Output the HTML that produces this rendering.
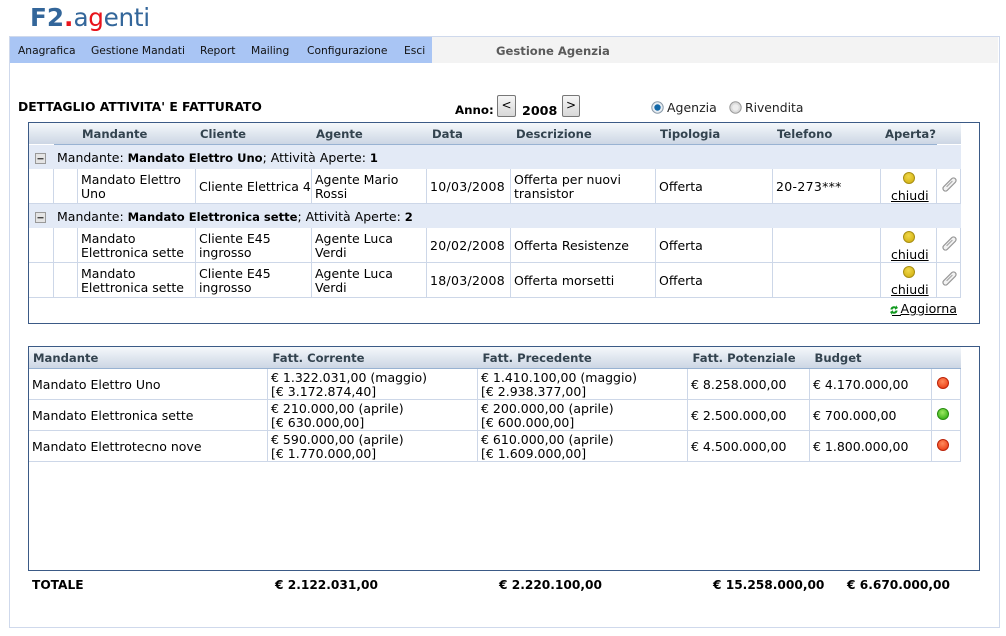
<!DOCTYPE html>
<html><head><meta charset="utf-8"><title>F2.agenti</title>
<style>
html,body{margin:0;padding:0;background:#fff}
body{width:1006px;height:636px;position:relative;overflow:hidden;font-family:"DejaVu Sans","Liberation Sans",sans-serif;font-size:12.5px;color:#000}
div,span.t,a.t{position:absolute}
.t{position:absolute;white-space:nowrap;line-height:14px}
.m{font-size:10.7px;color:#111}
.h{font-weight:bold;font-size:11.6px;color:#33434f}
.b{font-weight:bold}
.bb{font-weight:bold;font-size:12.2px;color:#000}
.n{letter-spacing:.3px}
.t b.g2{font-size:11.55px}
.l{background:#cdd7e8}
.hd{background:linear-gradient(#f5f8fb,#ccd6e4)}
.g{background:#e3eaf6}
a{color:#000;text-decoration:underline}
svg{position:absolute;overflow:visible}
.y,.r,.v{width:10px;height:10px;border-radius:50%}
.y{background:radial-gradient(circle at 45% 35%,#f0d84a,#d8b81c 70%);border:1px solid #a88f14}
.r{background:radial-gradient(circle at 45% 35%,#ff8a5c,#ee4a20 70%);border:1px solid #bb2208}
.v{background:radial-gradient(circle at 45% 35%,#9ce860,#44b820 70%);border:1px solid #288c10}
</style></head><body>

<span class="t" style="left:30px;top:2px;line-height:32px;font-size:24.7px;color:#33669a"><b>F2</b><b style="color:#e8141c">.</b><span style="letter-spacing:-.3px">a<span style="color:#e8141c">g</span>enti</span></span>

<div style="left:9px;top:36px;width:989px;height:590px;border:1px solid #cfd9ec"></div>
<div style="left:10px;top:37px;width:422px;height:26px;background:#a9c5f4"></div>
<div style="left:432px;top:37px;width:566px;height:26px;background:#f3f3f3"></div>
<span class="t m" style="left:18px;top:44px">Anagrafica</span>
<span class="t m" style="left:91px;top:44px">Gestione Mandati</span>
<span class="t m" style="left:200px;top:44px">Report</span>
<span class="t m" style="left:251px;top:44px">Mailing</span>
<span class="t m" style="left:307px;top:44px">Configurazione</span>
<span class="t m" style="left:404px;top:44px">Esci</span>
<span class="t" style="left:496px;top:44px;font-weight:bold;font-size:11.6px;color:#5a5a5a">Gestione Agenzia</span>

<span class="t b" style="left:18px;top:100px;font-size:12.35px;color:#000">DETTAGLIO ATTIVITA' E FATTURATO</span>
<span class="t b" style="left:455px;top:103px;font-size:11.8px;color:#000">Anno:</span>
<div style="left:497px;top:95px;width:17px;height:20px;border:1px solid #777;border-radius:2px;background:linear-gradient(#f6f6f6,#d8d8d8);text-align:center;line-height:18px;font-size:12px">&lt;</div>
<span class="t b" style="left:522px;top:104px;font-size:12.7px;color:#000">2008</span>
<div style="left:562px;top:95px;width:16px;height:20px;border:1px solid #777;border-radius:2px;background:linear-gradient(#f6f6f6,#d8d8d8);text-align:center;line-height:18px;font-size:12px">&gt;</div>

<svg style="left:651px;top:101px" width="13" height="13"><circle cx="6.5" cy="6.5" r="5.7" fill="#e8eef4" stroke="#8a9aa8"/><circle cx="6.5" cy="6.5" r="3.2" fill="#1368a8"/></svg>
<span class="t" style="left:667px;top:101px;color:#222">Agenzia</span>
<svg style="left:729px;top:101px" width="13" height="13"><circle cx="6.5" cy="6.5" r="5.7" fill="#dcdcdc" stroke="#9a9a9a"/><circle cx="6.5" cy="6.5" r="3.2" fill="#eee"/></svg>
<span class="t" style="left:745px;top:101px;color:#222;font-size:12.35px">Rivendita</span>

<!-- panel 1 -->
<div style="left:28px;top:122px;width:950px;height:200px;border:1px solid #3b5a86"></div>
<div class="hd" style="left:29px;top:123px;width:932px;height:21px"></div>
<div style="left:54px;top:144px;width:883px;height:1px;background:#98b2d2"></div>
<span class="t h" style="left:82px;top:127px">Mandante</span>
<span class="t h" style="left:200px;top:127px">Cliente</span>
<span class="t h" style="left:316px;top:127px">Agente</span>
<span class="t h" style="left:432px;top:127px">Data</span>
<span class="t h" style="left:516px;top:127px">Descrizione</span>
<span class="t h" style="left:660px;top:127px">Tipologia</span>
<span class="t h" style="left:777px;top:127px">Telefono</span>
<span class="t h" style="left:885px;top:127px">Aperta?</span>

<div class="g" style="left:29px;top:145px;width:932px;height:24px"></div>
<div class="g" style="left:29px;top:204px;width:932px;height:24px"></div>
<div class="l" style="left:29px;top:203px;width:932px;height:1px"></div>
<div class="l" style="left:29px;top:262px;width:932px;height:1px"></div>
<div class="l" style="left:29px;top:297px;width:932px;height:1px"></div>

<div class="l" style="left:53px;top:169px;width:1px;height:34px"></div>
<div class="l" style="left:77px;top:169px;width:1px;height:34px"></div>
<div class="l" style="left:195px;top:169px;width:1px;height:34px"></div>
<div class="l" style="left:311px;top:169px;width:1px;height:34px"></div>
<div class="l" style="left:426px;top:169px;width:1px;height:34px"></div>
<div class="l" style="left:510px;top:169px;width:1px;height:34px"></div>
<div class="l" style="left:655px;top:169px;width:1px;height:34px"></div>
<div class="l" style="left:772px;top:169px;width:1px;height:34px"></div>
<div class="l" style="left:880px;top:169px;width:1px;height:34px"></div>
<div class="l" style="left:936px;top:169px;width:1px;height:34px"></div>
<div class="l" style="left:960px;top:169px;width:1px;height:34px"></div>

<div class="l" style="left:53px;top:228px;width:1px;height:69px"></div>
<div class="l" style="left:77px;top:228px;width:1px;height:69px"></div>
<div class="l" style="left:195px;top:228px;width:1px;height:69px"></div>
<div class="l" style="left:311px;top:228px;width:1px;height:69px"></div>
<div class="l" style="left:426px;top:228px;width:1px;height:69px"></div>
<div class="l" style="left:510px;top:228px;width:1px;height:69px"></div>
<div class="l" style="left:655px;top:228px;width:1px;height:69px"></div>
<div class="l" style="left:772px;top:228px;width:1px;height:69px"></div>
<div class="l" style="left:880px;top:228px;width:1px;height:69px"></div>
<div class="l" style="left:936px;top:228px;width:1px;height:69px"></div>
<div class="l" style="left:960px;top:228px;width:1px;height:69px"></div>

<svg style="left:35px;top:153px" width="12" height="12"><rect x=".5" y=".5" width="10" height="10" fill="#e4e4e4" stroke="#999"/><rect x="2.5" y="5" width="6" height="1.4" fill="#444"/></svg>
<svg style="left:35px;top:212px" width="12" height="12"><rect x=".5" y=".5" width="10" height="10" fill="#e4e4e4" stroke="#999"/><rect x="2.5" y="5" width="6" height="1.4" fill="#444"/></svg>
<span class="t" style="left:57px;top:151px">Mandante: <b class="g2">Mandato Elettro Uno</b>; Attività Aperte: <b class="g2">1</b></span>
<span class="t" style="left:57px;top:210px">Mandante: <b class="g2">Mandato Elettronica sette</b>; Attività Aperte: <b class="g2">2</b></span>

<span class="t" style="left:81px;top:173px">Mandato Elettro<br>Uno</span>
<span class="t" style="left:199px;top:180px">Cliente Elettrica 4</span>
<span class="t" style="left:315px;top:173px">Agente Mario<br>Rossi</span>
<span class="t n" style="left:430px;top:180px">10/03/2008</span>
<span class="t" style="left:514px;top:173px">Offerta per nuovi<br>transistor</span>
<span class="t" style="left:659px;top:180px">Offerta</span>
<span class="t n" style="left:776px;top:180px">20-273***</span>

<span class="t" style="left:81px;top:232px">Mandato<br>Elettronica sette</span>
<span class="t" style="left:199px;top:232px">Cliente E45<br>ingrosso</span>
<span class="t" style="left:315px;top:232px">Agente Luca<br>Verdi</span>
<span class="t n" style="left:430px;top:239px">20/02/2008</span>
<span class="t" style="left:514px;top:239px">Offerta Resistenze</span>
<span class="t" style="left:659px;top:239px">Offerta</span>

<span class="t" style="left:81px;top:267px">Mandato<br>Elettronica sette</span>
<span class="t" style="left:199px;top:267px">Cliente E45<br>ingrosso</span>
<span class="t" style="left:315px;top:267px">Agente Luca<br>Verdi</span>
<span class="t n" style="left:430px;top:274px">18/03/2008</span>
<span class="t" style="left:514px;top:274px">Offerta morsetti</span>
<span class="t" style="left:659px;top:274px">Offerta</span>

<div class="y" style="left:903px;top:172px"></div>
<div class="y" style="left:903px;top:231px"></div>
<div class="y" style="left:903px;top:266px"></div>
<a class="t" style="left:891px;top:189px">chiudi</a>
<a class="t" style="left:891px;top:248px">chiudi</a>
<a class="t" style="left:891px;top:283px">chiudi</a>

<svg style="left:942px;top:177px" width="15" height="15" viewBox="0 0 15 15"><path d="M1.7 9.7 9.7 1.7A2.5 2.5 0 0 1 13.3 5.3L5.3 13.3A2.5 2.5 0 0 1 1.7 9.7Z" fill="#f2f2f2" stroke="#979797" stroke-width="1.2"/><path d="M4.6 9.8 10.4 4" fill="none" stroke="#a8a8a8" stroke-width="1.2"/></svg>
<svg style="left:942px;top:236px" width="15" height="15" viewBox="0 0 15 15"><path d="M1.7 9.7 9.7 1.7A2.5 2.5 0 0 1 13.3 5.3L5.3 13.3A2.5 2.5 0 0 1 1.7 9.7Z" fill="#f2f2f2" stroke="#979797" stroke-width="1.2"/><path d="M4.6 9.8 10.4 4" fill="none" stroke="#a8a8a8" stroke-width="1.2"/></svg>
<svg style="left:942px;top:271px" width="15" height="15" viewBox="0 0 15 15"><path d="M1.7 9.7 9.7 1.7A2.5 2.5 0 0 1 13.3 5.3L5.3 13.3A2.5 2.5 0 0 1 1.7 9.7Z" fill="#f2f2f2" stroke="#979797" stroke-width="1.2"/><path d="M4.6 9.8 10.4 4" fill="none" stroke="#a8a8a8" stroke-width="1.2"/></svg>

<svg style="left:890px;top:305px" width="8" height="10" viewBox="0 0 8 10"><path d="M.5 4.5C.5 2 3 .6 6 1.6V.2L8 3 5 4.8V3.5C3.8 3 2.9 3.4 2.6 4.5ZM7.5 5.5C7.5 8 5 9.4 2 8.4V9.8L0 7 3 5.2V6.5C4.2 7 5.1 6.6 5.4 5.5Z" fill="#129a20"/></svg>
<a class="t" style="left:897.5px;top:302px;padding-left:3px;font-size:12.6px">Aggiorna</a>
<div style="left:892px;top:315px;width:9px;height:1px;background:#000"></div>

<!-- panel 2 -->
<div style="left:28px;top:346px;width:950px;height:223px;border:1px solid #3b5a86"></div>
<div class="hd" style="left:29px;top:347px;width:932px;height:21px"></div>
<div style="left:29px;top:368px;width:932px;height:1px;background:#98b2d2"></div>
<span class="t h" style="left:33px;top:351px">Mandante</span>
<span class="t h" style="left:272.5px;top:351px">Fatt. Corrente</span>
<span class="t h" style="left:482.5px;top:351px">Fatt. Precedente</span>
<span class="t h" style="left:692.5px;top:351px">Fatt. Potenziale</span>
<span class="t h" style="left:814.5px;top:351px">Budget</span>

<div class="l" style="left:29px;top:399px;width:932px;height:1px"></div>
<div class="l" style="left:29px;top:430px;width:932px;height:1px"></div>
<div class="l" style="left:29px;top:461px;width:932px;height:1px"></div>
<div class="l" style="left:267px;top:369px;width:1px;height:92px"></div>
<div class="l" style="left:477px;top:369px;width:1px;height:92px"></div>
<div class="l" style="left:687px;top:369px;width:1px;height:92px"></div>
<div class="l" style="left:809px;top:369px;width:1px;height:92px"></div>
<div class="l" style="left:931px;top:369px;width:1px;height:92px"></div>
<div class="l" style="left:960px;top:369px;width:1px;height:92px"></div>

<span class="t" style="left:32px;top:378px">Mandato Elettro Uno</span>
<span class="t" style="left:32px;top:409px">Mandato Elettronica sette</span>
<span class="t" style="left:32px;top:440px">Mandato Elettrotecno nove</span>

<span class="t" style="left:271px;top:371px">€ 1.322.031,00 (maggio)<br>[€ 3.172.874,40]</span>
<span class="t" style="left:271px;top:402px">€ 210.000,00 (aprile)<br>[€ 630.000,00]</span>
<span class="t" style="left:271px;top:433px">€ 590.000,00 (aprile)<br>[€ 1.770.000,00]</span>
<span class="t" style="left:481px;top:371px">€ 1.410.100,00 (maggio)<br>[€ 2.938.377,00]</span>
<span class="t" style="left:481px;top:402px">€ 200.000,00 (aprile)<br>[€ 600.000,00]</span>
<span class="t" style="left:481px;top:433px">€ 610.000,00 (aprile)<br>[€ 1.609.000,00]</span>

<span class="t" style="left:691px;top:378px">€ 8.258.000,00</span>
<span class="t" style="left:691px;top:409px">€ 2.500.000,00</span>
<span class="t" style="left:691px;top:440px">€ 4.500.000,00</span>
<span class="t" style="left:813px;top:378px">€ 4.170.000,00</span>
<span class="t" style="left:813px;top:409px">€ 700.000,00</span>
<span class="t" style="left:813px;top:440px">€ 1.800.000,00</span>

<div class="r" style="left:937px;top:377px"></div>
<div class="v" style="left:937px;top:408px"></div>
<div class="r" style="left:937px;top:439px"></div>

<span class="t bb" style="left:32px;top:578px">TOTALE</span>
<span class="t bb" style="left:275px;top:578px">€ 2.122.031,00</span>
<span class="t bb" style="left:499px;top:578px">€ 2.220.100,00</span>
<span class="t bb" style="left:713px;top:578px">€ 15.258.000,00</span>
<span class="t bb" style="left:847px;top:578px">€ 6.670.000,00</span>
</body></html>
